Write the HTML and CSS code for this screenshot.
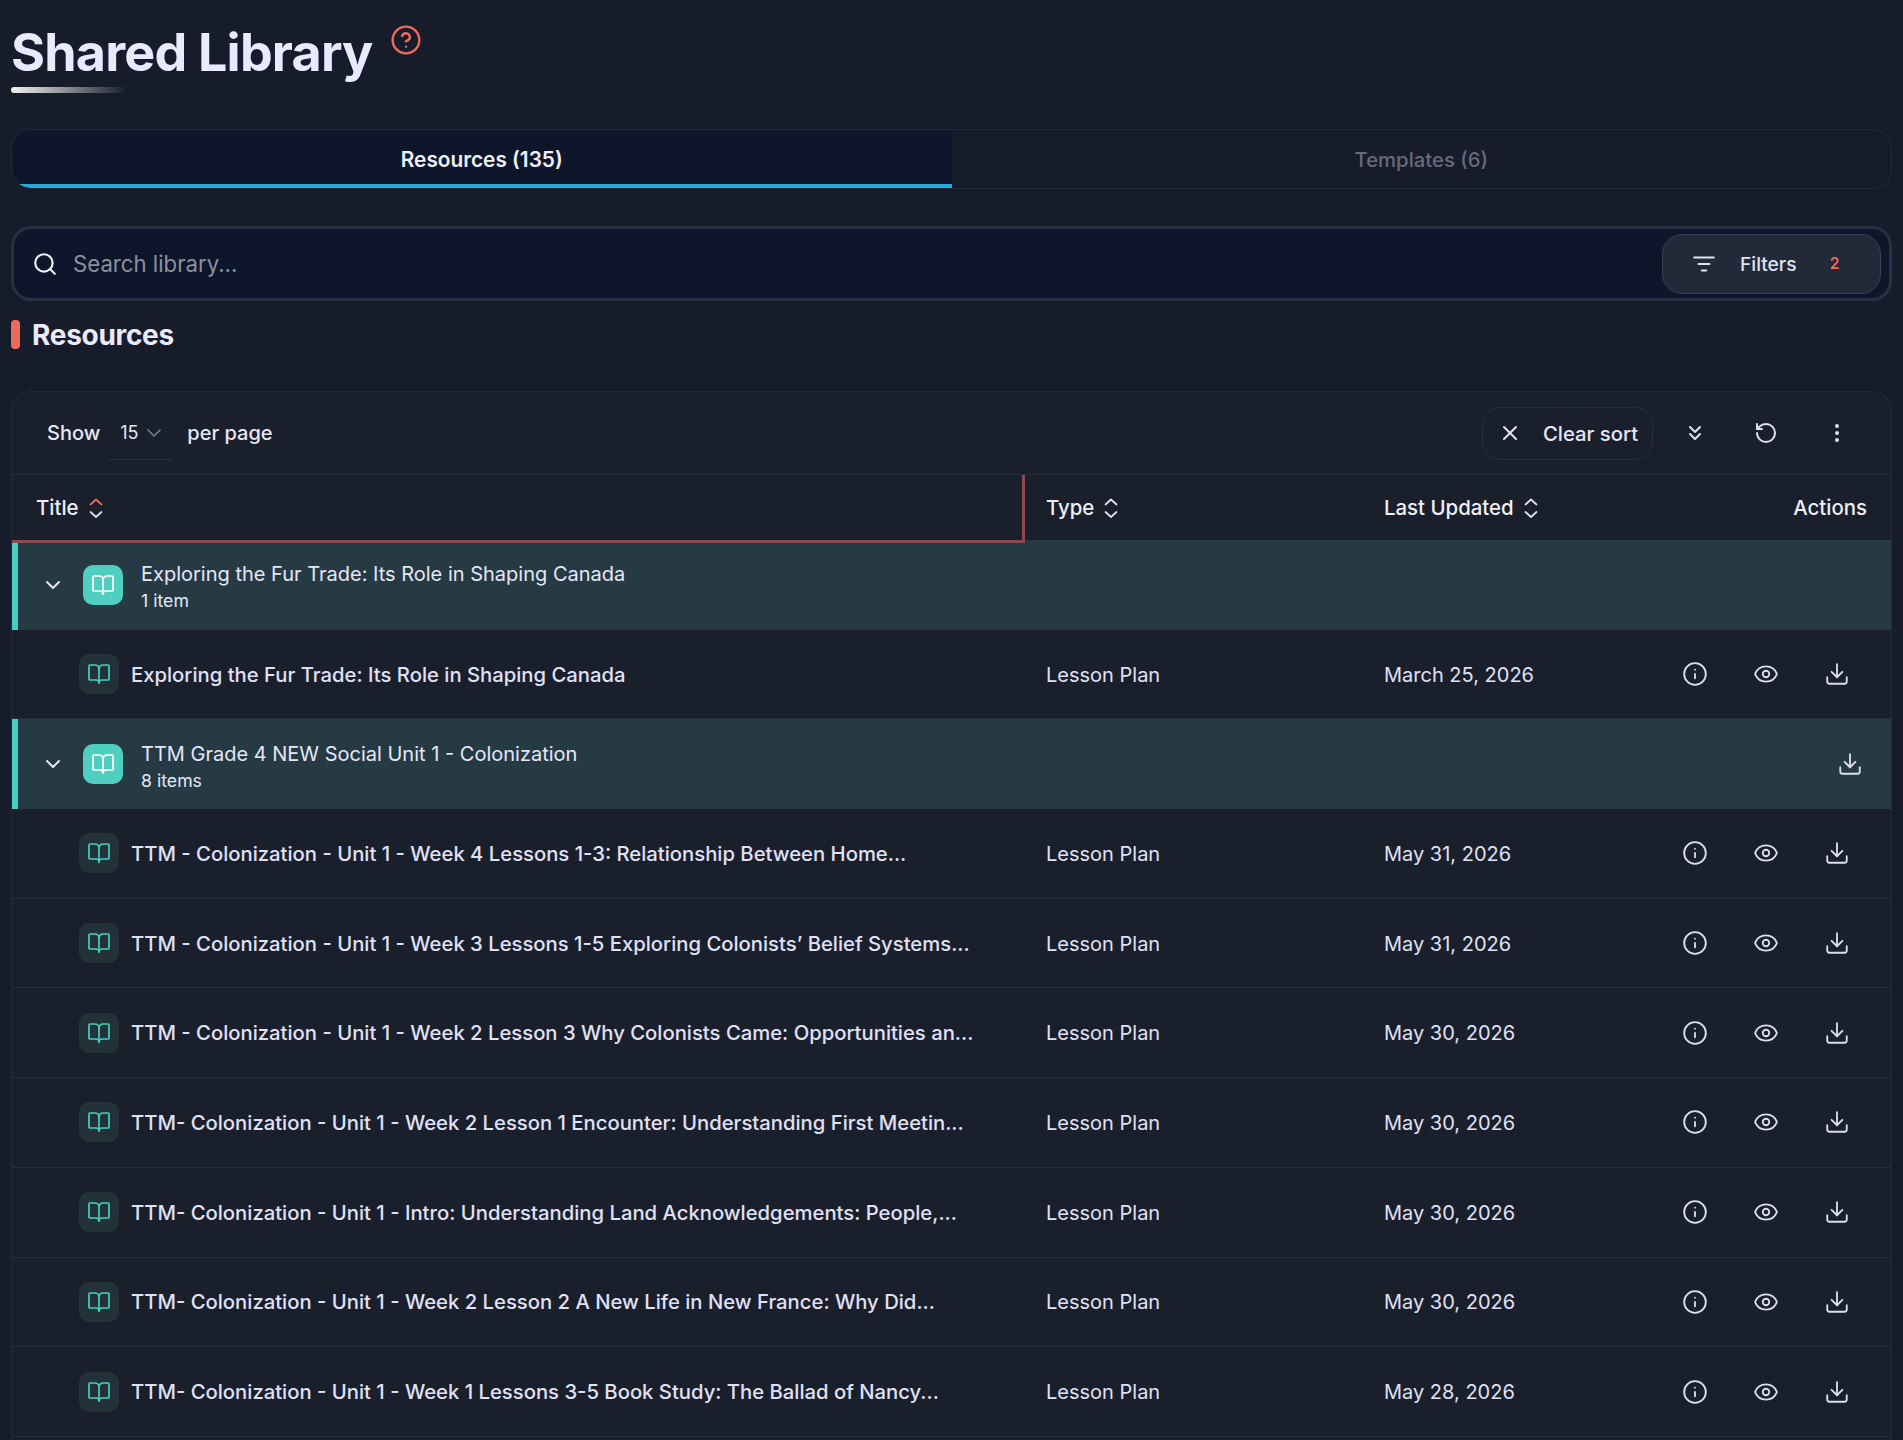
FILE: index.html
```html
<!DOCTYPE html>
<html lang="en">
<head>
<meta charset="utf-8">
<title>Shared Library</title>
<link rel="stylesheet" href="styles.css">
</head>
<body>
<svg class="defs" width="0" height="0" aria-hidden="true">
  <symbol id="i-book" viewBox="0 0 24 24"><path d="M12 7v14"/><path d="M3 18a1 1 0 0 1-1-1V4a1 1 0 0 1 1-1h5a4 4 0 0 1 4 4 4 4 0 0 1 4-4h5a1 1 0 0 1 1 1v13a1 1 0 0 1-1 1h-6a3 3 0 0 0-3 3 3 3 0 0 0-3-3z"/></symbol>
  <symbol id="i-info" viewBox="0 0 24 24"><circle cx="12" cy="12" r="10"/><path d="M12 16v-4"/><path d="M12 8h.01"/></symbol>
  <symbol id="i-eye" viewBox="0 0 24 24"><path d="M2.06 12.35a1 1 0 0 1 0-.7 10.75 10.75 0 0 1 19.88 0 1 1 0 0 1 0 .7 10.75 10.75 0 0 1-19.88 0"/><circle cx="12" cy="12" r="3"/></symbol>
  <symbol id="i-dl" viewBox="0 0 24 24"><path d="M12 15V3"/><path d="M21 15v4a2 2 0 0 1-2 2H5a2 2 0 0 1-2-2v-4"/><path d="m7 10 5 5 5-5"/></symbol>
  <symbol id="i-chev" viewBox="0 0 24 24"><path d="m6 9 6 6 6-6"/></symbol>
  <symbol id="i-sort" viewBox="0 0 24 24"><path d="m6.5 8.5 5.5-5 5.5 5"/><path d="m6.5 16 5.5 5 5.5-5"/></symbol>
</svg>

<main class="page">
  <header class="title-block">
    <div class="title-line">
      <h1 class="title">Shared Library</h1>
      <svg class="icon help" viewBox="0 0 24 24"><circle cx="12" cy="12" r="10"/><path d="M9.09 9a3 3 0 0 1 5.83 1c0 2-3 3-3 3"/><path d="M12 17h.01"/></svg>
    </div>
    <div class="title-rule"></div>
  </header>

  <nav class="tabs">
    <div class="tab tab-active">Resources (135)</div>
    <div class="tab">Templates (6)</div>
  </nav>

  <div class="search">
    <svg class="icon search-icon" viewBox="0 0 24 24"><path d="m21 21-4.34-4.34"/><circle cx="11" cy="11" r="8"/></svg>
    <span class="search-text">Search library...</span>
    <div class="filters">
      <svg class="icon filter-icon" viewBox="0 0 24 24"><path d="M3 6h18"/><path d="M7 12h10"/><path d="M10 18h4"/></svg>
      <span class="filters-label">Filters</span>
      <span class="filters-count">2</span>
    </div>
  </div>

  <h2 class="section"><span class="section-bar"></span>Resources</h2>

  <section class="card">
    <div class="toolbar">
      <span>Show</span>
      <div class="select"><span>15</span><svg class="icon select-chev"><use href="#i-chev"/></svg></div>
      <span>per page</span>
      <div class="clear-sort">
        <svg class="icon x-icon" viewBox="0 0 24 24"><path d="M18 6 6 18"/><path d="m6 6 12 12"/></svg>
        <span>Clear sort</span>
      </div>
      <div class="tool-slots">
        <svg class="icon tool" viewBox="0 0 24 24"><path d="m7 6 5 5 5-5"/><path d="m7 13 5 5 5-5"/></svg>
        <svg class="icon tool" viewBox="0 0 24 24"><path d="M3 12a9 9 0 1 0 9-9 9.75 9.75 0 0 0-6.74 2.74L3 8"/><path d="M3 3v5h5"/></svg>
        <svg class="icon tool" viewBox="0 0 24 24"><circle cx="12" cy="5" r="1"/><circle cx="12" cy="12" r="1"/><circle cx="12" cy="19" r="1"/></svg>
      </div>
    </div>

    <div class="row head">
      <div class="th th-title">Title <svg class="icon sort" viewBox="0 0 24 24"><path class="sort-up-active" d="m6.5 8.5 5.5-5 5.5 5"/><path d="m6.5 16 5.5 5 5.5-5"/></svg></div>
      <div class="th th-type">Type <svg class="icon sort"><use href="#i-sort"/></svg></div>
      <div class="th th-date">Last Updated <svg class="icon sort"><use href="#i-sort"/></svg></div>
      <div class="th th-actions">Actions</div>
    </div>

    <div class="group">
      <svg class="icon group-chev"><use href="#i-chev"/></svg>
      <span class="group-badge"><svg class="icon book"><use href="#i-book"/></svg></span>
      <div class="group-text"><div class="group-name">Exploring the Fur Trade: Its Role in Shaping Canada</div><div class="group-count">1 item</div></div>
    </div>
    <div class="row item">
      <div class="cell-title"><span class="item-badge"><svg class="icon book"><use href="#i-book"/></svg></span><span class="item-name">Exploring the Fur Trade: Its Role in Shaping Canada</span></div>
      <div class="cell-type">Lesson Plan</div>
      <div class="cell-date">March 25, 2026</div>
      <div class="cell-actions"><svg class="icon act"><use href="#i-info"/></svg><svg class="icon act"><use href="#i-eye"/></svg><svg class="icon act"><use href="#i-dl"/></svg></div>
    </div>

    <div class="group">
      <svg class="icon group-chev"><use href="#i-chev"/></svg>
      <span class="group-badge"><svg class="icon book"><use href="#i-book"/></svg></span>
      <div class="group-text"><div class="group-name">TTM Grade 4 NEW Social Unit 1 - Colonization</div><div class="group-count">8 items</div></div>
      <svg class="icon act group-dl"><use href="#i-dl"/></svg>
    </div>
    <div class="row item">
      <div class="cell-title"><span class="item-badge"><svg class="icon book"><use href="#i-book"/></svg></span><span class="item-name">TTM - Colonization - Unit 1 - Week 4 Lessons 1-3: Relationship Between Home...</span></div>
      <div class="cell-type">Lesson Plan</div>
      <div class="cell-date">May 31, 2026</div>
      <div class="cell-actions"><svg class="icon act"><use href="#i-info"/></svg><svg class="icon act"><use href="#i-eye"/></svg><svg class="icon act"><use href="#i-dl"/></svg></div>
    </div>
    <div class="row item">
      <div class="cell-title"><span class="item-badge"><svg class="icon book"><use href="#i-book"/></svg></span><span class="item-name">TTM - Colonization - Unit 1 - Week 3 Lessons 1-5 Exploring Colonists’ Belief Systems...</span></div>
      <div class="cell-type">Lesson Plan</div>
      <div class="cell-date">May 31, 2026</div>
      <div class="cell-actions"><svg class="icon act"><use href="#i-info"/></svg><svg class="icon act"><use href="#i-eye"/></svg><svg class="icon act"><use href="#i-dl"/></svg></div>
    </div>
    <div class="row item">
      <div class="cell-title"><span class="item-badge"><svg class="icon book"><use href="#i-book"/></svg></span><span class="item-name">TTM - Colonization - Unit 1 - Week 2 Lesson 3 Why Colonists Came: Opportunities an...</span></div>
      <div class="cell-type">Lesson Plan</div>
      <div class="cell-date">May 30, 2026</div>
      <div class="cell-actions"><svg class="icon act"><use href="#i-info"/></svg><svg class="icon act"><use href="#i-eye"/></svg><svg class="icon act"><use href="#i-dl"/></svg></div>
    </div>
    <div class="row item">
      <div class="cell-title"><span class="item-badge"><svg class="icon book"><use href="#i-book"/></svg></span><span class="item-name">TTM- Colonization - Unit 1 - Week 2 Lesson 1 Encounter: Understanding First Meetin...</span></div>
      <div class="cell-type">Lesson Plan</div>
      <div class="cell-date">May 30, 2026</div>
      <div class="cell-actions"><svg class="icon act"><use href="#i-info"/></svg><svg class="icon act"><use href="#i-eye"/></svg><svg class="icon act"><use href="#i-dl"/></svg></div>
    </div>
    <div class="row item">
      <div class="cell-title"><span class="item-badge"><svg class="icon book"><use href="#i-book"/></svg></span><span class="item-name">TTM- Colonization - Unit 1 - Intro: Understanding Land Acknowledgements: People,...</span></div>
      <div class="cell-type">Lesson Plan</div>
      <div class="cell-date">May 30, 2026</div>
      <div class="cell-actions"><svg class="icon act"><use href="#i-info"/></svg><svg class="icon act"><use href="#i-eye"/></svg><svg class="icon act"><use href="#i-dl"/></svg></div>
    </div>
    <div class="row item">
      <div class="cell-title"><span class="item-badge"><svg class="icon book"><use href="#i-book"/></svg></span><span class="item-name">TTM- Colonization - Unit 1 - Week 2 Lesson 2 A New Life in New France: Why Did...</span></div>
      <div class="cell-type">Lesson Plan</div>
      <div class="cell-date">May 30, 2026</div>
      <div class="cell-actions"><svg class="icon act"><use href="#i-info"/></svg><svg class="icon act"><use href="#i-eye"/></svg><svg class="icon act"><use href="#i-dl"/></svg></div>
    </div>
    <div class="row item">
      <div class="cell-title"><span class="item-badge"><svg class="icon book"><use href="#i-book"/></svg></span><span class="item-name">TTM- Colonization - Unit 1 - Week 1 Lessons 3-5 Book Study: The Ballad of Nancy...</span></div>
      <div class="cell-type">Lesson Plan</div>
      <div class="cell-date">May 28, 2026</div>
      <div class="cell-actions"><svg class="icon act"><use href="#i-info"/></svg><svg class="icon act"><use href="#i-eye"/></svg><svg class="icon act"><use href="#i-dl"/></svg></div>
    </div>
  </section>
</main>
</body>
</html>
```

FILE: styles.css
```css
* { box-sizing: border-box; }
html, body { margin: 0; height: 1440px; overflow: hidden; }
body {
  background: #171c2b;
  color: #e6e6fa;
  font-family: Inter, "Noto Sans", sans-serif;
}
.defs { position: absolute; }
.icon {
  fill: none;
  stroke: currentColor;
  stroke-width: 2;
  stroke-linecap: round;
  stroke-linejoin: round;
  flex: none;
  display: block;
}
.page { padding: 0 11px; }

.title-block { height: 129px; padding-top: 21px; }
.title-line { display: flex; align-items: flex-start; height: 66px; }
.title {
  margin: 0;
  font-size: 52px;
  line-height: 63px;
  font-weight: 700;
  letter-spacing: -0.8px;
  color: #e9e9ff;
}
.help { width: 32px; height: 32px; color: #ee6a5a; margin: 3px 0 0 17px; stroke-width: 1.8; }
.title-rule {
  width: 116px;
  height: 6px;
  border-radius: 3px;
  background: linear-gradient(90deg, #f4f4f0, rgba(244, 244, 240, 0));
}

.tabs {
  display: grid;
  grid-template-columns: 1fr 1fr;
  height: 60px;
  border: 1px solid #232a3a;
  border-radius: 20px;
  overflow: hidden;
}
.tab {
  display: flex;
  align-items: center;
  justify-content: center;
  font-size: 20.3px;
  font-weight: 500;
  color: #666b7a;
}
.tab-active {
  background: #0d162b;
  color: #f0f1f8;
  font-size: 20.8px;
  font-weight: 600;
  border-bottom: 4px solid #28a9d8;
  padding-top: 4px;
}

.search {
  margin-top: 37px;
  height: 75px;
  display: flex;
  align-items: center;
  border: 3px solid #2a2f41;
  border-radius: 20px;
  background: #0d162b;
  padding: 0 8px 0 18px;
}
.search-icon { width: 26px; height: 26px; color: #eef0f6; }
.search-text { margin-left: 15px; font-size: 22.2px; color: #8b90a0; flex: 1; }
.filters {
  width: 219px;
  height: 60px;
  display: flex;
  align-items: center;
  padding-left: 28px;
  background: #222a39;
  border: 1px solid #3a4252;
  border-radius: 20px;
  color: #dfe2ee;
}
.filter-icon { width: 26px; height: 26px; }
.filters-label { margin-left: 23px; font-size: 19.2px; font-weight: 500; }
.filters-count { margin-left: 33px; font-size: 15.5px; font-weight: 600; color: #ee6a5a; }

.section {
  margin: 19px 0 0;
  height: 29px;
  display: flex;
  align-items: center;
  gap: 12px;
  font-size: 28px;
  font-weight: 700;
  letter-spacing: -0.3px;
  color: #e9e9ff;
}
.section-bar { width: 9px; height: 29px; border-radius: 4px; background: #ee6a5a; }

.card {
  margin-top: 42px;
  height: 1100px;
  background: #1a1f2c;
  border: 1px solid #242a39;
  border-bottom: 0;
  border-radius: 20px 20px 0 0;
}
.toolbar {
  height: 83px;
  display: flex;
  align-items: center;
  padding: 0 19px 0 35px;
  font-size: 20px;
  font-weight: 500;
  color: #e6e7f2;
  border-bottom: 1px solid #262c3b;
}
.select {
  width: 63px;
  height: 50px;
  margin: 4px 14px 0 10px;
  display: flex;
  align-items: center;
  gap: 3px;
  padding: 0 0 4px 10px;
  font-size: 18px;
  font-weight: 400;
  border-bottom: 1px solid #2b3242;
}
.select-chev { width: 24px; height: 24px; color: #747a8a; stroke-width: 1.7; }
.clear-sort {
  margin-left: auto;
  width: 171px;
  height: 53px;
  display: flex;
  align-items: center;
  gap: 21px;
  padding-left: 15px;
  font-size: 20.3px;
  border: 1px solid #282e3d;
  border-radius: 18px;
}
.x-icon { width: 24px; height: 24px; }
.tool-slots { display: grid; grid-template-columns: repeat(3, 71px); justify-items: center; margin-left: 6px; }
.tool { width: 24px; height: 24px; color: #dfe1ee; }

.row {
  display: grid;
  grid-template-columns: 1013px 343px 1fr 214px;
  align-items: stretch;
}
.head { height: 65px; font-size: 20.4px; font-weight: 500; color: #eef0f8; }
.th { display: flex; align-items: center; gap: 5px; height: 65px; }
.th-title {
  position: relative;
  z-index: 1;
  height: 68px;
  padding-left: 24px;
  border-right: 3px solid #8b4a4d;
  border-bottom: 3px solid #8b4a4d;
}
.th-type { padding-left: 21px; }
.th-date { padding-left: 16px; }
.th-actions { justify-content: flex-end; padding-right: 24px; }
.sort { width: 24px; height: 24px; stroke-width: 1.7; color: #e3e5ee; }
.sort-up-active { color: #ee6a5a; }

.group {
  height: 89.7px;
  display: flex;
  align-items: center;
  background: #253a43;
  border-left: 6px solid #46cfc0;
  padding-left: 23px;
  color: #e6e7f8;
}
.group-chev { width: 24px; height: 24px; color: #e6e7f2; }
.group-badge {
  width: 40px;
  height: 40px;
  margin-left: 18px;
  border-radius: 10px;
  background: #4fcfc0;
  color: #fff;
  display: flex;
  align-items: center;
  justify-content: center;
}
.book { width: 24px; height: 24px; stroke-width: 1.7; }
.group-text { margin-left: 18px; padding-top: 6px; }
.group-name { font-size: 20px; line-height: 27px; font-weight: 400; }
.group-count { font-size: 17.7px; line-height: 26px; font-weight: 400; }
.group-dl { margin-left: auto; margin-right: 28px; }

.item {
  height: 89.7px;
  border-bottom: 1px solid #262c3b;
  font-size: 20px;
  font-weight: 500;
  color: #e0e1f6;
}
.cell-title { display: flex; align-items: center; padding-left: 67px; gap: 12px; }
.item-badge {
  width: 40px;
  height: 40px;
  border-radius: 10px;
  background: #233238;
  color: #46cfc0;
  display: flex;
  align-items: center;
  justify-content: center;
}
.item-name { white-space: nowrap; font-size: 20.25px; font-weight: 500; }
.cell-type { display: flex; align-items: center; padding: 1px 0 0 21px; font-weight: 400; }
.cell-date { display: flex; align-items: center; padding: 1px 0 0 16px; font-weight: 400; }
.cell-actions { display: grid; grid-template-columns: repeat(3, 71px); justify-items: center; align-items: center; margin-left: -18px; }
.act { width: 26px; height: 26px; stroke-width: 1.7; color: #dcdfee; }
```
